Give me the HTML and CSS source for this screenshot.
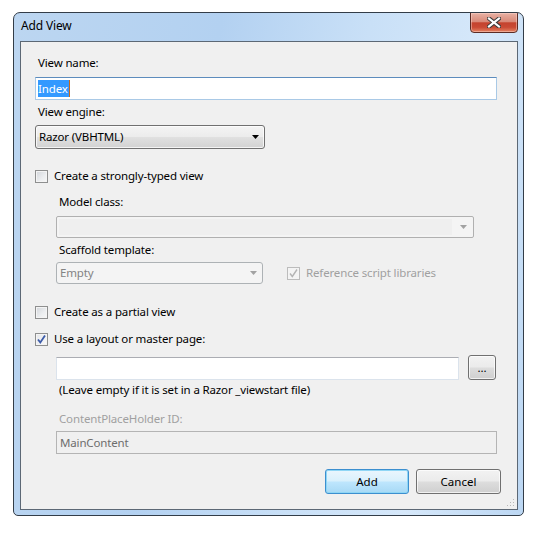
FILE: index.html
```html
<!DOCTYPE html>
<html lang="en">
  <head>
    <meta charset="UTF-8" />
    <title>Add View</title>
    <link rel="stylesheet" href="styles.css">
  </head>
  <body>
    <div class="window">
      <div class="titlebar">
        <span class="title">Add View</span>
        <button class="close-btn">
          <svg width="14" height="11" viewBox="0 0 14 11">
            <path d="M2 1.5 L12 9.5 M12 1.5 L2 9.5" stroke="#3b3b3b" stroke-width="4.2" stroke-linecap="square" fill="none" />
            <path d="M2 1.5 L12 9.5 M12 1.5 L2 9.5" stroke="#fff" stroke-width="2.2" stroke-linecap="square" fill="none" />
          </svg>
        </button>
      </div>

      <div class="client">
        <div class="form">
          <label class="lbl lbl-name">View name:</label>
          <div class="textbox focused"><span class="sel">Index</span><span class="caret"></span></div>

          <label class="lbl lbl-engine">View engine:</label>
          <div class="dropdown engine">
            <span>Razor (VBHTML)</span>
            <svg class="arrow" width="7" height="4" viewBox="0 0 7 4"><path d="M0 0 H7 L3.5 4 Z" fill="#000" /></svg>
          </div>

          <div class="check-row row-typed">
            <span class="checkbox"></span>
            <span>Create a strongly-typed view</span>
          </div>

          <div class="indent">
            <label class="lbl lbl-model">Model class:</label>
            <div class="combo">
              <div class="combo-field"></div>
              <svg class="arrow" width="7" height="4" viewBox="0 0 7 4"><path d="M0 0 H7 L3.5 4 Z" fill="#a2a2a2" /></svg>
            </div>

            <label class="lbl lbl-scaffold">Scaffold template:</label>
            <div class="scaffold-row">
              <div class="dropdown disabled">
                <span>Empty</span>
                <svg class="arrow" width="7" height="4" viewBox="0 0 7 4"><path d="M0 0 H7 L3.5 4 Z" fill="#a2a2a2" /></svg>
              </div>
              <div class="check-row muted">
                <span class="checkbox disabled">
                  <svg width="11" height="11" viewBox="0 0 11 11"><path d="M2 5.5 L4.3 8.5 L9 1.5" stroke="#b4b4b4" stroke-width="1.4" fill="none" /></svg>
                </span>
                <span>Reference script libraries</span>
              </div>
            </div>
          </div>

          <div class="check-row row-partial">
            <span class="checkbox"></span>
            <span>Create as a partial view</span>
          </div>

          <div class="check-row row-layout">
            <span class="checkbox">
              <svg width="11" height="11" viewBox="0 0 11 11"><path d="M2 5.5 L4.3 8.5 L9 1.5" stroke="#3c5ba8" stroke-width="1.8" fill="none" /></svg>
            </span>
            <span>Use a layout or master page:</span>
          </div>

          <div class="indent">
            <div class="layout-row">
              <div class="textbox plain"></div>
              <button class="btn browse">...</button>
            </div>
            <div class="hint">(Leave empty if it is set in a Razor _viewstart file)</div>
            <label class="lbl lbl-cph muted">ContentPlaceHolder ID:</label>
            <div class="textbox disabled">MainContent</div>
          </div>

          <div class="actions">
            <button class="btn default">Add</button>
            <button class="btn">Cancel</button>
          </div>
        </div>

        <svg class="grip" width="8" height="8" viewBox="0 0 8 8">
          <rect x="6" y="0" width="1" height="1" fill="#b8b8b8" />
          <rect x="3" y="3" width="1" height="1" fill="#b8b8b8" />
          <rect x="6" y="3" width="1" height="1" fill="#b8b8b8" />
          <rect x="0" y="6" width="1" height="1" fill="#b8b8b8" />
          <rect x="3" y="6" width="1" height="1" fill="#b8b8b8" />
          <rect x="6" y="6" width="1" height="1" fill="#b8b8b8" />
        </svg>
      </div>
    </div>
  </body>
</html>
```

FILE: styles.css
```css
* {
  margin: 0;
  padding: 0;
  box-sizing: border-box;
}
body {
  background-color: #fff;
  font-family: "Noto Sans", "Open Sans", sans-serif;
  font-size: 11.5px;
  letter-spacing: -0.15px;
  line-height: 16px;
  color: #000;
}
.window {
  margin: 12px 0 0 13px;
  width: 511px;
  height: 504px;
  border: 1px solid #333d48;
  border-radius: 7px 7px 5px 5px;
  background: linear-gradient(100deg, #bcd6f1 0%, #b3d1f1 35%, #c9e0f7 60%, #d6e8fa 80%, #bcd7f3 100%);
  display: flex;
  flex-direction: column;
  overflow: hidden;
}
.titlebar {
  height: 28px;
  display: flex;
  justify-content: space-between;
  align-items: flex-start;
}
.title {
  padding: 5px 0 0 7px;
  font-size: 12px;
}
.close-btn {
  width: 48px;
  height: 21px;
  margin: -1px 5px 0 0;
  border: 1px solid #5b2c25;
  border-radius: 0 0 4px 4px;
  background: linear-gradient(#e8b1a4 0%, #d98a79 45%, #c4432e 52%, #c94a34 75%, #e58463 100%);
  box-shadow: inset 0 0 0 1px rgba(255, 220, 210, 0.45);
  display: flex;
  justify-content: center;
  align-items: center;
}
.client {
  position: relative;
  flex-grow: 1;
  margin: 0 5px 5px 6px;
  border: 1px solid #5c6875;
  background-color: #f0f0f0;
}
.form {
  display: flex;
  flex-direction: column;
  align-items: flex-start;
  padding: 13px 20px 0 14px;
}
.lbl {
  display: block;
  padding-left: 3px;
}
.muted {
  color: #a0a0a0;
}
.lbl-engine {
  margin-top: 4px;
}
.lbl-model {
  margin-top: 10px;
}
.lbl-scaffold {
  margin-top: 4px;
}
.lbl-cph {
  margin-top: 13px;
}

/* text boxes */
.textbox {
  height: 23px;
  width: 100%;
  border: 1px solid #dbe3ec;
  border-top-color: #abadb3;
  background-color: #fff;
  padding: 2px 2px;
  display: flex;
  align-items: center;
}
.textbox.focused {
  margin-top: 6px;
  border-color: #a9c9e6;
  border-top-color: #5d8cbd;
}
.sel {
  background-color: #3399ff;
  color: #fff;
  line-height: 17px;
  padding-right: 1px;
}
.caret {
  width: 1px;
  height: 17px;
  background-color: #c8681a;
}
.textbox.plain {
  width: 403px;
  height: 23px;
  margin-top: 1px;
}
.textbox.disabled {
  margin-top: 4px;
  height: 23px;
  border: 1px solid #b4b4b4;
  background-color: #f0f0f0;
  color: #6d6d6d;
  padding-left: 3px;
}

/* drop downs */
.dropdown {
  display: flex;
  align-items: center;
  justify-content: space-between;
  border: 1px solid #707070;
  border-radius: 3px;
  background: linear-gradient(#f4f4f4 0%, #ececec 48%, #e0e0e0 52%, #d2d2d2 100%);
  box-shadow: inset 0 0 0 1px rgba(255, 255, 255, 0.75);
  padding: 0 5px 0 3px;
}
.dropdown.engine {
  margin-top: 5px;
  width: 230px;
  height: 24px;
}
.dropdown.disabled {
  width: 207px;
  height: 22px;
  border-color: #adb2b5;
  background: #f4f4f4;
  box-shadow: none;
  color: #838383;
}
.arrow {
  flex-shrink: 0;
}
.combo {
  margin-top: 6px;
  width: 418px;
  height: 22px;
  border: 1px solid #b0b0b0;
  border-radius: 2px;
  background-color: #f4f4f4;
  display: flex;
  align-items: center;
  padding: 2px 6px 2px 2px;
}
.combo-field {
  flex-grow: 1;
  height: 100%;
  background-color: #efefef;
  margin-right: 8px;
}

/* check boxes */
.check-row {
  display: flex;
  align-items: center;
  gap: 6px;
}
.row-typed {
  margin-top: 19px;
}
.row-partial {
  margin-top: 20px;
}
.row-layout {
  margin-top: 11px;
}
.checkbox {
  width: 13px;
  height: 13px;
  border: 1px solid #8e8f8f;
  background: linear-gradient(135deg, #d2d5da 0%, #eceef0 60%, #f7f7f7 100%);
  box-shadow: inset 0 0 0 1px #f4f4f4;
  display: flex;
  align-items: center;
  justify-content: center;
}
.row-layout .checkbox {
  background: linear-gradient(135deg, #e4e6ea, #fafafa);
}
.checkbox.disabled {
  border-color: #bcbcbc;
  background: #f4f4f4;
  box-shadow: none;
}

.indent {
  display: flex;
  flex-direction: column;
  align-items: flex-start;
  width: 100%;
  padding-left: 21px;
}
.scaffold-row {
  margin-top: 4px;
  display: flex;
  align-items: center;
  gap: 24px;
}
.layout-row {
  margin-top: 8px;
  display: flex;
  align-items: center;
  gap: 9px;
}
.hint {
  margin-top: 2px;
  padding-left: 3px;
}

/* buttons */
.btn {
  font: inherit;
  color: #000;
  border: 1px solid #707070;
  border-radius: 3px;
  background: linear-gradient(#f2f2f2 0%, #ebebeb 48%, #dddddd 52%, #cfcfcf 100%);
  box-shadow: inset 0 0 0 1px rgba(255, 255, 255, 0.7);
}
.btn.browse {
  width: 28px;
  height: 25px;
  line-height: 14px;
}
.actions {
  align-self: flex-end;
  margin: 15px -4px 0 0;
  display: flex;
  gap: 7px;
}
.actions .btn {
  width: 85px;
  height: 25px;
}
.btn.default {
  width: 84px;
  border-color: #3c8fcf;
  background: linear-gradient(#eaf6fd 0%, #d9f0fc 48%, #bee6fd 52%, #a7d9f5 100%);
  box-shadow: inset 0 0 0 1px #8fd6f5;
}
.grip {
  position: absolute;
  right: 2px;
  bottom: 2px;
}
```
